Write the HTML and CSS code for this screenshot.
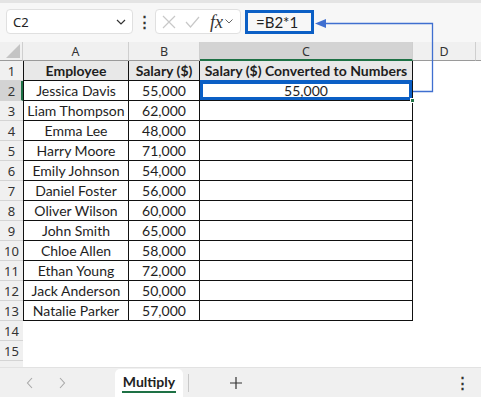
FILE: index.html
```
<!DOCTYPE html>
<html lang="en">
<head>
    <meta charset="UTF-8">
    <title>Multiply</title>
    <link rel="stylesheet" href="styles.css">
</head>
<body>
    <div class="app">
        <div class="ribbon-edge"></div>

        <!-- formula bar -->
        <div class="formula-bar">
            <div class="name-box">
                <span>C2</span>
                <svg width="10" height="6" viewBox="0 0 10 6"><path d="M1 1l4 4 4-4" fill="none" stroke="#333" stroke-width="1.2"/></svg>
            </div>
            <div class="dots">&#8942;</div>
            <div class="fx-box">
                <svg width="14" height="14" viewBox="0 0 14 14"><path d="M1 1l12 12M13 1L1 13" stroke="#c8c8c8" stroke-width="1.2"/></svg>
                <svg width="15" height="12" viewBox="0 0 15 12"><path d="M1 6l4.5 5L14 1" fill="none" stroke="#c8c8c8" stroke-width="1.2"/></svg>
                <span class="fx">fx</span>
                <svg width="8" height="5" viewBox="0 0 8 5"><path d="M0.5 0.5l3.5 3.5 3.5-3.5" fill="none" stroke="#666" stroke-width="1"/></svg>
            </div>
            <div class="formula-input">
                <div class="formula-text">=B2*1</div>
            </div>
        </div>

        <!-- sheet -->
        <div class="sheet">
            <div class="corner"><svg width="16" height="16" viewBox="0 0 16 16"><path d="M16 2V16H2z" fill="#c4c4c4"/></svg></div>
            <div class="col-head">A</div>
            <div class="col-head">B</div>
            <div class="col-head sel">C</div>
            <div class="col-head">D</div>
            <div class="col-head rest"></div>

            <div class="row-head">1</div>
            <div class="cell t th">Employee</div>
            <div class="cell t th">Salary ($)</div>
            <div class="cell t th">Salary ($) Converted to Numbers</div>
            <div class="cell"></div><div class="cell"></div>

            <div class="row-head sel">2</div>
            <div class="cell t">Jessica Davis</div>
            <div class="cell t">55,000</div>
            <div class="cell t active">55,000<span class="handle"></span></div>
            <div class="cell"></div><div class="cell"></div>

            <div class="row-head">3</div>
            <div class="cell t">Liam Thompson</div>
            <div class="cell t">62,000</div>
            <div class="cell t"></div>
            <div class="cell"></div><div class="cell"></div>

            <div class="row-head">4</div>
            <div class="cell t">Emma Lee</div>
            <div class="cell t">48,000</div>
            <div class="cell t"></div>
            <div class="cell"></div><div class="cell"></div>

            <div class="row-head">5</div>
            <div class="cell t">Harry Moore</div>
            <div class="cell t">71,000</div>
            <div class="cell t"></div>
            <div class="cell"></div><div class="cell"></div>

            <div class="row-head">6</div>
            <div class="cell t">Emily Johnson</div>
            <div class="cell t">54,000</div>
            <div class="cell t"></div>
            <div class="cell"></div><div class="cell"></div>

            <div class="row-head">7</div>
            <div class="cell t">Daniel Foster</div>
            <div class="cell t">56,000</div>
            <div class="cell t"></div>
            <div class="cell"></div><div class="cell"></div>

            <div class="row-head">8</div>
            <div class="cell t">Oliver Wilson</div>
            <div class="cell t">60,000</div>
            <div class="cell t"></div>
            <div class="cell"></div><div class="cell"></div>

            <div class="row-head">9</div>
            <div class="cell t">John Smith</div>
            <div class="cell t">65,000</div>
            <div class="cell t"></div>
            <div class="cell"></div><div class="cell"></div>

            <div class="row-head">10</div>
            <div class="cell t">Chloe Allen</div>
            <div class="cell t">58,000</div>
            <div class="cell t"></div>
            <div class="cell"></div><div class="cell"></div>

            <div class="row-head">11</div>
            <div class="cell t">Ethan Young</div>
            <div class="cell t">72,000</div>
            <div class="cell t"></div>
            <div class="cell"></div><div class="cell"></div>

            <div class="row-head">12</div>
            <div class="cell t">Jack Anderson</div>
            <div class="cell t">50,000</div>
            <div class="cell t"></div>
            <div class="cell"></div><div class="cell"></div>

            <div class="row-head">13</div>
            <div class="cell t">Natalie Parker</div>
            <div class="cell t">57,000</div>
            <div class="cell t"></div>
            <div class="cell"></div><div class="cell"></div>

            <div class="row-head">14</div>
            <div class="cell"></div><div class="cell"></div><div class="cell"></div><div class="cell"></div><div class="cell"></div>

            <div class="row-head">15</div>
            <div class="cell"></div><div class="cell"></div><div class="cell"></div><div class="cell"></div><div class="cell"></div>

            <div class="row-head"></div>
        </div>

        <!-- sheet tabs -->
        <div class="tabs">
            <div class="nav">
                <svg width="8" height="12" viewBox="0 0 8 12"><path d="M6 1L1.5 6 6 11" fill="none" stroke="#a8a8a8" stroke-width="1.1"/></svg>
                <svg width="8" height="12" viewBox="0 0 8 12"><path d="M2 1l4.5 5L2 11" fill="none" stroke="#a8a8a8" stroke-width="1.1"/></svg>
            </div>
            <div class="tab active">Multiply</div>
            <div class="tab-sep"></div>
            <div class="add">
                <svg width="12" height="12" viewBox="0 0 12 12"><path d="M6 0v12M0 6h12" stroke="#333" stroke-width="1.2"/></svg>
            </div>
            <div class="more">&#8942;</div>
        </div>

        <!-- annotation arrow from C2 to formula -->
        <svg class="arrow" width="481" height="397" viewBox="0 0 481 397">
            <path d="M413 91.5H432.5V23.5H324" fill="none" stroke="#3f6fd0" stroke-width="1.3"/>
            <path d="M315 23.5l11-4.5v9z" fill="#3f6fd0"/>
        </svg>
    </div>
</body>
</html>
```

FILE: styles.css
```
*{
    padding:0;
    margin:0;
    box-sizing:border-box;
}
body{
    width:481px;
    height:397px;
    overflow:hidden;
    background:#fff;
    font-family:'Lato','Liberation Sans',sans-serif;
    color:#1e1e1e;
}
.app{
    position:relative;
    width:481px;
    height:397px;
    display:flex;
    flex-direction:column;
}
.ribbon-edge{
    height:3px;
    background:#e4e4e4;
}
.formula-bar{
    height:39px;
    background:#f7f7f7;
    display:flex;
    align-items:center;
    padding:0 0 2px 6px;
}
.name-box{
    width:127px;
    height:25px;
    background:#fff;
    border:1px solid #e0e0e0;
    border-radius:4px;
    display:flex;
    align-items:center;
    justify-content:space-between;
    padding:0 6px 0 6px;
    font-family:'Noto Sans',sans-serif;
    font-size:13px;
    color:#222;
}
.dots{
    width:22px;
    text-align:center;
    font-size:15px;
    font-weight:bold;
    color:#333;
}
.fx-box{
    width:86px;
    height:25px;
    background:#fff;
    border:1px solid #e0e0e0;
    border-radius:4px;
    display:flex;
    align-items:center;
    gap:9px;
    padding-left:6px;
}
.fx{
    font-family:'Liberation Serif',serif;
    font-style:italic;
    font-size:18px;
    color:#333;
    margin-left:1px;
    margin-right:-7px;
    line-height:18px;
}
.formula-input{
    flex:1;
    height:25px;
    display:flex;
    align-items:center;
    padding-left:4px;
}
.formula-text{
    width:69px;
    height:24px;
    border:3px solid #0b5fc5;
    font-size:15px;
    padding-left:8px;
    line-height:18px;
    color:#222;
}
.sheet{
    height:325px;
    display:grid;
    grid-template-columns:23px 106px 71px 213px 63px 1fr;
    grid-template-rows:19px repeat(16,20px);
    overflow:hidden;
}
.corner{
    background:#f0f0f0;
    border-right:1px solid #cfcfcf;
    border-bottom:1px solid #9a9a9a;
    display:flex;
    align-items:flex-end;
    justify-content:flex-end;
    padding:0 2px 2px 0;
}
.col-head{
    background:#f0f0f0;
    border-right:1px solid #cfcfcf;
    border-bottom:1px solid #9a9a9a;
    font-family:'Noto Sans',sans-serif;
    font-size:12.5px;
    color:#333;
    text-align:center;
    line-height:19px;
}
.col-head.sel{
    background:#d3d3d3;
    border-bottom:2px solid #1e7145;
}
.col-head.rest{
    border-right:none;
}
.row-head{
    background:#f0f0f0;
    border-bottom:1px solid #d4d4d4;
    font-family:'Noto Sans',sans-serif;
    font-size:13px;
    color:#333;
    text-align:center;
    line-height:20px;
}
.row-head.sel{
    background:#d3d3d3;
    border-right:2px solid #1e7145;
    padding-left:2px;
}
.cell{
    font-size:14px;
    line-height:20px;
    text-align:center;
    white-space:nowrap;
}
.cell.t{
    border-right:1px solid #111;
    border-bottom:1px solid #111;
}
.sheet .cell.t:nth-child(6n+2){
    border-left:1px solid #111;
}
.cell.th{
    background:#e8e8e8;
    font-weight:bold;
    line-height:19px;
}
.cell.active{
    position:relative;
    box-shadow:inset 0 0 0 3px #0b5fc5;
    border-top:1px solid #0b5fc5;
    margin-top:-1px;
    line-height:19px;
}
.handle{
    position:absolute;
    right:-3px;
    bottom:-3px;
    width:5px;
    height:5px;
    background:#1e7145;
    border:1px solid #fff;
}
.tabs{
    flex:1;
    background:#f0f0f0;
    border-top:1px solid #e2e2e2;
    display:flex;
    align-items:flex-end;
}
.nav{
    width:115px;
    height:100%;
    display:flex;
    align-items:center;
    gap:24px;
    padding-left:26px;
}
.tab{
    height:28px;
    width:68px;
    background:#fff;
    border-radius:5px 5px 0 0;
    font-size:14px;
    font-weight:bold;
    color:#222;
    text-align:center;
    line-height:26px;
    position:relative;
}
.tab.active::after{
    content:'';
    position:absolute;
    left:7px;
    right:7px;
    bottom:4px;
    height:2px;
    background:#1e7145;
}
.tab-sep{
    width:1px;
    height:18px;
    background:#c8c8c8;
    margin:0 0 5px 5px;
}
.add{
    width:94px;
    height:100%;
    display:flex;
    align-items:center;
    justify-content:center;
}
.more{
    flex:1;
    height:100%;
    text-align:right;
    padding-right:11px;
    font-size:15px;
    font-weight:bold;
    line-height:28px;
    color:#333;
}
.arrow{
    position:absolute;
    left:0;
    top:0;
    pointer-events:none;
}
```
